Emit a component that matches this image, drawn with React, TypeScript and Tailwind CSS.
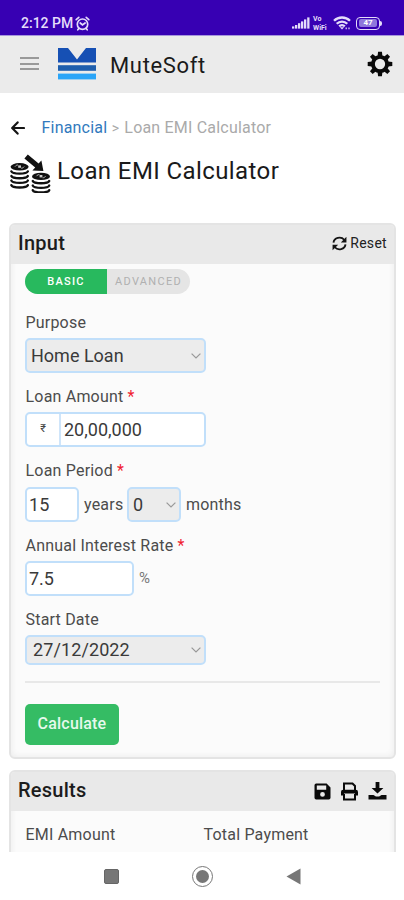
import type { ReactNode } from 'react';
import clsx from 'clsx';

function AlarmIcon() {
  return (
    <svg width="15" height="15" viewBox="0 0 15 15" fill="none" stroke="#e4dcfa" strokeWidth="1.7" strokeLinecap="round">
      <circle cx="7.5" cy="8.2" r="5.2" />
      <path d="M1.2 3.6 3.8 1.4M13.8 3.6 11.2 1.4M5.2 7l2.3 2 2.6-2M3.8 12.6l-1 1.2M11.2 12.6l1 1.2" />
    </svg>
  );
}

function SignalIcon() {
  return (
    <svg width="18" height="12" viewBox="0 0 18 12" fill="#e4dcfa">
      <rect x="0" y="9.4" width="2.3" height="2.2" />
      <rect x="3" y="8" width="2.3" height="3.6" />
      <rect x="6" y="6.2" width="2.3" height="5.4" />
      <rect x="9" y="4.4" width="2.3" height="7.2" />
      <rect x="12" y="2.4" width="2.3" height="9.2" />
      <rect x="15.2" y="0.4" width="2.3" height="11.2" />
    </svg>
  );
}

function WifiIcon() {
  return (
    <svg width="18" height="14" viewBox="0 0 18 14" fill="none" stroke="#e4dcfa" strokeWidth="2.3">
      <path d="M1 4.8C5.4.4 12.6.4 17 4.8M3.7 7.8c3-3 7.6-3 10.6 0M6.2 10.4c1.6-1.6 4-1.6 5.6 0" />
      <path d="M6.8 11.2 9 13.6l2.2-2.4z" fill="#e4dcfa" stroke="none" />
      <path d="M12.6 12.4h1.2M15.4 12.4h1.2" strokeWidth="1.6" />
    </svg>
  );
}

function BatteryIcon() {
  return (
    <div className="flex items-center">
      <div className="flex h-[13px] w-[24px] items-center justify-center rounded-[4px] border-[1.5px] border-[#e4dcfa]">
        <span className="flex h-[8px] w-[18px] items-center justify-center rounded-[2px] bg-[#8f78dc] text-[8px] leading-none font-bold text-white">
          47
        </span>
      </div>
      <div className="h-[5px] w-[2px] rounded-r bg-[#e4dcfa]" />
    </div>
  );
}

function Logo() {
  return (
    <svg width="38" height="32" viewBox="0 0 38 32">
      <path d="M0 0h10l9 11.4L28 0h10v14.6H0z" fill="#1650b4" />
      <rect y="17.2" width="38" height="5.6" fill="#1e5ead" />
      <rect y="25.6" width="38" height="5.8" fill="#2aa5f8" />
    </svg>
  );
}

function GearIcon() {
  const teeth = [0, 45, 90, 135, 180, 225, 270, 315];
  return (
    <svg width="26" height="26" viewBox="-13 -13 26 26">
      <circle r="7.1" fill="none" stroke="#0a0a0a" strokeWidth="3.9" />
      {teeth.map((angle) => (
        <path key={angle} d="M-2.4-8-1.9-12.3H1.9L2.4-8z" fill="#0a0a0a" transform={`rotate(${angle})`} />
      ))}
    </svg>
  );
}

function CoinStack({ x, y, layers }: { x: number; y: number; layers: number }) {
  return (
    <g transform={`translate(${x} ${y})`}>
      <ellipse cx="9" cy="3.6" rx="9" ry="3.7" fill="#111" />
      <path d="M4.4 3.4c1-1.4 2-1.6 3-1.6M13.6 3.4c-1 1.4-2 1.6-3 1.6" fill="none" stroke="#ddd" strokeWidth="0.8" />
      <path d="M7.6 2.2h2.8v2.4H7.6z" fill="#ccc" />
      {Array.from({ length: layers }, (_, i) => (
        <path
          key={i}
          d="M.8 5.8c1.2 3 15.2 3 16.4 0"
          transform={`translate(0 ${2.4 + i * 4.6})`}
          fill="none"
          stroke="#111"
          strokeWidth="2.4"
          strokeLinecap="round"
        />
      ))}
    </g>
  );
}

function LoanIcon() {
  return (
    <svg width="41" height="39" viewBox="0 0 41 39">
      <CoinStack x={0.6} y={9.2} layers={4} />
      <CoinStack x={22} y={18.8} layers={3} />
      <path d="M14.4 4.6 17.8.6l10.8 8.8 2.8-3L33.4 17l-11-.6 2.8-3z" fill="#111" />
    </svg>
  );
}

function BackIcon() {
  return (
    <svg width="14" height="14" viewBox="0 0 14 14" fill="none" stroke="#151515" strokeWidth="2.2" strokeLinecap="round" strokeLinejoin="round">
      <path d="M13 7H1.4M6.6 1.4 1.2 7l5.4 5.6" />
    </svg>
  );
}

function RefreshIcon() {
  return (
    <svg width="15" height="15" viewBox="0 0 16 16" fill="none" stroke="#151515" strokeWidth="2">
      <path d="M1.6 7A6.4 5.8 0 0 1 13 4M14.4 9A6.4 5.8 0 0 1 3 12" />
      <path d="M15.4.8v6H9.4zM.6 15.2v-6h6z" fill="#151515" stroke="none" />
    </svg>
  );
}

function SaveIcon() {
  return (
    <svg width="17" height="17" viewBox="0 0 17 17">
      <path
        fillRule="evenodd"
        d="M2.2.5h10.4l3.9 3.9v10.4a1.7 1.7 0 0 1-1.7 1.7H2.2a1.7 1.7 0 0 1-1.7-1.7V2.2A1.7 1.7 0 0 1 2.2.5zM2.8 2.6v4.2h9.4V2.6zM8.5 9a2.4 2.4 0 1 0 0 4.8 2.4 2.4 0 0 0 0-4.8z"
        fill="#0a0a0a"
      />
    </svg>
  );
}

function PrintIcon() {
  return (
    <svg width="19" height="19" viewBox="0 0 19 19" fill="none" stroke="#0a0a0a" strokeWidth="2">
      <path d="M4 8V1.5h8.5L15 4v4" />
      <path d="M1 13.6V10a2.2 2.2 0 0 1 2.2-2.2h12.6A2.2 2.2 0 0 1 18 10v3.6h-3v-2H4v2z" fill="#0a0a0a" stroke="none" />
      <path d="M4 12v5.5h11V12" />
    </svg>
  );
}

function DownloadIcon() {
  return (
    <svg width="19" height="18" viewBox="0 0 19 18" fill="#0a0a0a">
      <path d="M7.6 0h3.8v6h4L9.5 11.6 3.6 6h4z" />
      <path d="M.5 13h5l2.4 1.4h3.2L13.5 13h5v4.4H.5z" />
    </svg>
  );
}

function Chevron() {
  return (
    <svg width="10" height="6" viewBox="0 0 10 6" fill="none" stroke="#999" strokeWidth="1.2">
      <path d="M.6.6 5 5 9.4.6" />
    </svg>
  );
}

function Label({ text, required }: { text: string; required?: boolean }) {
  return (
    <div className="h-[20px] pl-[0.5px] text-[16px] leading-[22px] tracking-[0.2px] text-[#4c4c4c]">
      {text}
      {required && <span className="text-[#f02030]"> *</span>}
    </div>
  );
}

function Select({ value, className }: { value: string; className?: string }) {
  return (
    <div
      className={clsx(
        'flex items-center justify-between rounded-[5px] border-2 border-[#c1dffa] bg-[#ececec] pr-[3px] text-[18px] text-[#3a3a3a]',
        className
      )}
    >
      <span className="leading-[20px]">{value}</span>
      <Chevron />
    </div>
  );
}

function Input({ value, className }: { value: string; className?: string }) {
  return (
    <div
      className={clsx(
        'flex h-[35px] items-center rounded-[5px] border-2 border-[#c1dffa] bg-white pl-[2px] text-[18px] leading-[20px] text-[#3a3a3a]',
        className
      )}
    >
      {value}
    </div>
  );
}

function Panel({ title, actions, className, children }: { title: string; actions: ReactNode; className?: string; children: ReactNode }) {
  return (
    <section className={clsx('mr-[8px] ml-[9px] shrink-0 overflow-hidden rounded-[6px] border-2 border-[#e4e4e4] bg-[#fbfbfb] shadow-[inset_0_0_6px_#e9e9e9]', className)}>
      <div className="flex h-[39px] items-center justify-between bg-[#e9e9e9] pb-[3px] pl-[7px]">
        <h2 className="text-[20px] font-medium tracking-[0.25px] text-[#1c1c1c]">{title}</h2>
        {actions}
      </div>
      {children}
    </section>
  );
}

export default function App() {
  return (
    <div className="flex h-[900px] w-[404px] flex-col overflow-hidden bg-white font-[Roboto,sans-serif]">
      <div className="flex h-[36px] shrink-0 items-center justify-between border-b border-[#a795dc] bg-[#3700b3] pt-[11px] pr-[22px] pl-[21px]">
        <div className="flex items-center">
          <span className="w-[54px] text-[14px] font-medium whitespace-nowrap text-[#e4dcfa]">2:12 PM</span>
          <AlarmIcon />
        </div>
        <div className="flex items-center gap-[3px]">
          <SignalIcon />
          <div className="flex w-[17px] flex-col gap-px text-[7px] leading-[8px] font-bold text-[#e4dcfa]">
            <div>Vo</div>
            <div>WiFi</div>
          </div>
          <WifiIcon />
          <div className="pl-[2px]">
            <BatteryIcon />
          </div>
        </div>
      </div>

      <header className="flex h-[57px] shrink-0 items-center bg-[#ebebeb] pr-[11px] pl-[20px]">
        <div className="flex w-[38px] flex-col gap-[3.5px] pb-[2px]">
          <div className="h-[2px] w-[19px] bg-[#999]" />
          <div className="h-[2px] w-[19px] bg-[#999]" />
          <div className="h-[2px] w-[19px] bg-[#999]" />
        </div>
        <div className="pb-[1px]">
          <Logo />
        </div>
        <span className="ml-[14px] flex-1 pt-[1px] text-[22px] tracking-[0.65px] text-[#1a1a1a]">MuteSoft</span>
        <div className="pb-[1px]">
          <GearIcon />
        </div>
      </header>

      <nav className="mt-[24px] flex h-[22px] shrink-0 items-center pl-[11px] text-[16px] tracking-[0.2px] text-[#aaa]">
        <BackIcon />
        <span className="ml-[16.5px] text-[#3179bd]">Financial</span>
        <span className="ml-[4.5px] text-[14px]">&gt;</span>
        <span className="ml-[5px]">Loan EMI Calculator</span>
      </nav>

      <div className="mt-[13px] flex h-[42px] shrink-0 items-center pl-[10px]">
        <LoanIcon />
        <h1 className="ml-[6px] pb-[4px] text-[24px] tracking-[0.4px] text-[#1a1a1a]">Loan EMI Calculator</h1>
      </div>

      <main className="flex flex-1 flex-col gap-[11px] overflow-hidden pt-[29px]">
        <Panel
          title="Input"
          className="h-[536px]"
          actions={
            <div className="flex items-center gap-[3px] pr-[7px] text-[14px] tracking-[0.3px] text-[#222]">
              <RefreshIcon />
              Reset
            </div>
          }
        >
          <div className="px-[14px] pt-[5px]">
            <div className="flex h-[25px] w-[165px] overflow-hidden rounded-full bg-[#e5e5e5] text-[11px] tracking-[1.3px]">
              <div className="flex w-[82px] items-center justify-center bg-[#28b95e] pt-[1px] font-medium text-white">BASIC</div>
              <div className="flex flex-1 items-center justify-center pt-[1px] text-[#b0b0b0]">ADVANCED</div>
            </div>

            <div className="mt-[18px]">
              <Label text="Purpose" />
              <Select value="Home Loan" className="mt-[6px] h-[35px] w-[181px] pl-[4px]" />
            </div>

            <div className="mt-[13px]">
              <Label text="Loan Amount" required />
              <div className="mt-[6px] flex h-[35px] w-[181px] rounded-[5px] border-2 border-[#c1dffa] bg-white">
                <div className="flex w-[34px] items-center justify-center border-r-2 border-[#cfe5fa] text-[11px] text-[#444]">₹</div>
                <div className="flex items-center pl-[3px] text-[18px] leading-[20px] text-[#3a3a3a]">20,00,000</div>
              </div>
            </div>

            <div className="mt-[13px]">
              <Label text="Loan Period" required />
              <div className="mt-[7px] flex items-center text-[16px] tracking-[0.2px] text-[#4c4c4c]">
                <Input value="15" className="w-[54px]" />
                <span className="w-[48px] pl-[5px]">years</span>
                <Select value="0" className="h-[35px] w-[54px] pl-[4px]" />
                <span className="pl-[5px]">months</span>
              </div>
            </div>

            <div className="mt-[13px]">
              <Label text="Annual Interest Rate" required />
              <div className="mt-[6px] flex items-center gap-[5px] text-[15px] text-[#777]">
                <Input value="7.5" className="w-[109px]" />%
              </div>
            </div>

            <div className="mt-[13px]">
              <Label text="Start Date" />
              <Select value="27/12/2022" className="mt-[6px] h-[30px] w-[181px] pl-[6px] tracking-[0.1px]" />
            </div>

            <div className="mt-[16px] h-[2px] bg-[#e8e8e8]" />
            <button className="mt-[21px] h-[41px] w-[94px] rounded-[5px] bg-[#35bc64] pb-[1px] text-[16px] font-medium tracking-[0.2px] text-[#e6f9ec]">
              Calculate
            </button>
          </div>
        </Panel>

        <Panel
          title="Results"
          className="h-[120px]"
          actions={
            <div className="flex items-center gap-[9px] pt-[2px] pr-[7px]">
              <SaveIcon />
              <PrintIcon />
              <DownloadIcon />
            </div>
          }
        >
          <div className="grid grid-cols-[178px_1fr] pt-[13px] pl-[14px]">
            <Label text="EMI Amount" />
            <Label text="Total Payment" />
          </div>
        </Panel>
      </main>

      <footer className="flex h-[48px] shrink-0 items-center gap-[73px] bg-white pl-[104px]">
        <div className="h-[15px] w-[15px] rounded-[2px] border border-[#666] bg-[#777]" />
        <div className="flex h-[21px] w-[21px] items-center justify-center rounded-full border-[1.5px] border-[#777]">
          <div className="h-[13px] w-[13px] rounded-full bg-[#777]" />
        </div>
        <svg width="15" height="17" viewBox="0 0 15 17">
          <path d="M14.5.5v16L.5 8.5z" fill="#777" />
        </svg>
      </footer>
    </div>
  );
}
